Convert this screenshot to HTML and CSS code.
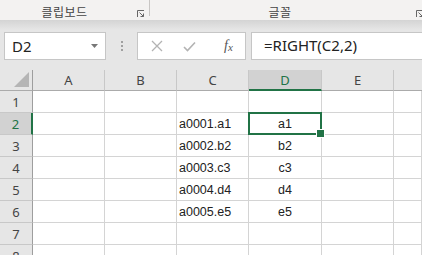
FILE: index.html
```html
<!DOCTYPE html>
<html lang="ko">
<head>
<meta charset="utf-8">
<link rel="stylesheet" href="styles.css">
</head>
<body>
<div class="ribbon">
  <div class="group g-clip">
    <span class="group-label">클립보드</span>
    <svg class="launcher" width="8" height="8" viewBox="0 0 8 8"><path d="M0.5 7V0.5H7" fill="none" stroke="#666" stroke-width="1"/><path d="M2.5 2.5L6.5 6.5M3.5 6.5H6.5V3.5" fill="none" stroke="#666" stroke-width="1"/></svg>
  </div>
  <div class="group g-font">
    <span class="group-label">글꼴</span>
    <svg class="launcher" width="8" height="8" viewBox="0 0 8 8"><path d="M0.5 7V0.5H7" fill="none" stroke="#666" stroke-width="1"/><path d="M2.5 2.5L6.5 6.5M3.5 6.5H6.5V3.5" fill="none" stroke="#666" stroke-width="1"/></svg>
  </div>
</div>
<div class="ribbon-shadow"></div>
<div class="formula-row">
  <div class="namebox">
    <span class="name">D2</span>
    <svg class="caret" width="7" height="4" viewBox="0 0 7 4"><path d="M0 0H7L3.5 4Z" fill="#777"/></svg>
  </div>
  <div class="dots"><i></i><i></i><i></i></div>
  <div class="actions">
    <svg class="act" width="12" height="12" viewBox="0 0 12 12"><path d="M1 1L11 11M11 1L1 11" stroke="#b3b3b3" stroke-width="1.3" fill="none"/></svg>
    <svg class="act" width="13" height="11" viewBox="0 0 13 11"><path d="M1 6L4.5 9.5L12 1.5" stroke="#b3b3b3" stroke-width="1.6" fill="none"/></svg>
    <span class="fx">f<sub>x</sub></span>
  </div>
  <div class="formula">=RIGHT(C2,2)</div>
</div>
<div class="sheet">
  <div class="hdr corner"><svg width="15" height="15" viewBox="0 0 15 15"><path d="M15 0V15H0Z" fill="#b5b5b5"/></svg></div>
  <div class="hdr col">A</div>
  <div class="hdr col">B</div>
  <div class="hdr col">C</div>
  <div class="hdr col sel">D</div>
  <div class="hdr col">E</div>
  <div class="hdr col last"></div>

  <div class="hdr row">1</div>
  <div class="cell"></div><div class="cell"></div><div class="cell"></div><div class="cell"></div><div class="cell"></div><div class="cell"></div>

  <div class="hdr row sel">2</div>
  <div class="cell"></div><div class="cell"></div><div class="cell">a0001.a1</div><div class="cell ctr active">a1</div><div class="cell"></div><div class="cell"></div>

  <div class="hdr row">3</div>
  <div class="cell"></div><div class="cell"></div><div class="cell">a0002.b2</div><div class="cell ctr">b2</div><div class="cell"></div><div class="cell"></div>

  <div class="hdr row">4</div>
  <div class="cell"></div><div class="cell"></div><div class="cell">a0003.c3</div><div class="cell ctr">c3</div><div class="cell"></div><div class="cell"></div>

  <div class="hdr row">5</div>
  <div class="cell"></div><div class="cell"></div><div class="cell">a0004.d4</div><div class="cell ctr">d4</div><div class="cell"></div><div class="cell"></div>

  <div class="hdr row">6</div>
  <div class="cell"></div><div class="cell"></div><div class="cell">a0005.e5</div><div class="cell ctr">e5</div><div class="cell"></div><div class="cell"></div>

  <div class="hdr row">7</div>
  <div class="cell"></div><div class="cell"></div><div class="cell"></div><div class="cell"></div><div class="cell"></div><div class="cell"></div>

  <div class="hdr row">8</div>
  <div class="cell"></div><div class="cell"></div><div class="cell"></div><div class="cell"></div><div class="cell"></div><div class="cell"></div>
</div>
</body>
</html>
```
FILE: styles.css
```css
* { box-sizing: border-box; }
html, body { margin: 0; padding: 0; }
body {
  width: 422px;
  height: 255px;
  overflow: hidden;
  background: #e6e6e6;
  font-family: "Liberation Sans", Arial, sans-serif;
}
.ribbon {
  height: 20px;
  background: #f3f2f1;
  display: flex;
}
.group {
  position: relative;
  display: flex;
  align-items: center;
}
.g-clip {
  width: 150px;
  border-right: 1px solid #c8c6c4;
  height: 16px;
  margin-top: 0;
  padding-right: 20px;
  justify-content: center;
  padding-top: 8px;
}
.g-font {
  flex: 1;
  height: 16px;
  justify-content: center;
  padding-top: 8px;
  padding-right: 12px;
}
.group-label {
  font-family: "Noto Sans CJK KR", sans-serif;
  font-size: 12px;
  color: #444;
  line-height: 14px;
  letter-spacing: 0.5px;
}
.launcher {
  position: absolute;
  top: 10px;
  right: 4px;
}
.g-font .launcher { right: -2px; }
.ribbon-shadow {
  height: 10px;
  background: linear-gradient(#d4d4d4, #e6e6e6);
}
.formula-row {
  height: 40px;
  display: flex;
  align-items: flex-start;
  padding-top: 2px;
}
.namebox {
  margin-left: 4px;
  width: 102px;
  height: 28px;
  background: #fff;
  border: 1px solid #c6c6c6;
  display: flex;
  align-items: center;
  padding-left: 7px;
  padding-right: 7px;
  justify-content: space-between;
}
.name {
  font-family: "Noto Sans", sans-serif;
  font-size: 15px;
  color: #222;
}
.dots {
  width: 31px;
  height: 28px;
  display: flex;
  flex-direction: column;
  align-items: center;
  justify-content: center;
  gap: 2px;
}
.dots i {
  width: 2px;
  height: 2px;
  background: #a0a0a0;
  display: block;
}
.actions {
  width: 109px;
  height: 28px;
  background: #fff;
  border: 1px solid #c6c6c6;
  display: flex;
  align-items: center;
  padding-left: 13px;
  gap: 20px;
}
.fx {
  font-family: "Liberation Serif", serif;
  font-style: italic;
  font-size: 14px;
  color: #555;
  margin-left: 8px;
}
.fx sub {
  font-size: 11px;
  vertical-align: -1px;
}
.formula {
  margin-left: 5px;
  flex: 1;
  height: 28px;
  background: #fff;
  border: 1px solid #c6c6c6;
  border-right: none;
  padding-left: 12px;
  font-family: "Noto Sans", sans-serif;
  font-size: 15px;
  line-height: 25px;
  color: #222;
}
.sheet {
  display: grid;
  grid-template-columns: 33px 72px 72px 72px 73px 72px 1fr;
  grid-template-rows: 21px repeat(8, 22px);
}
.hdr {
  background: #e6e6e6;
  color: #444;
  font-family: "Noto Sans", sans-serif;
  font-size: 13px;
  display: flex;
  align-items: center;
  justify-content: center;
}
.corner {
  border-right: 1px solid #9e9e9e;
  border-bottom: 1px solid #ababab;
  justify-content: flex-end;
  align-items: flex-end;
  padding: 0 3px 3px 0;
}
.corner svg { display: block; }
.col {
  border-right: 1px solid #c8c8c8;
  border-bottom: 1px solid #ababab;
}
.col.last { border-right: none; }
.col.sel {
  background: #d2d2d2;
  color: #217346;
  border-bottom: 2px solid #217346;
}
.row {
  border-right: 1px solid #9e9e9e;
  border-bottom: 1px solid #c8c8c8;
}
.row.sel {
  background: #d2d2d2;
  color: #217346;
  border-right: 2px solid #217346;
}
.cell {
  background: #fff;
  border-right: 1px solid #d4d4d4;
  border-bottom: 1px solid #d4d4d4;
  font-size: 12.5px;
  color: #222;
  display: flex;
  align-items: center;
  padding-left: 2px;
  padding-top: 1px;
  white-space: nowrap;
}
.cell.ctr { justify-content: center; padding-left: 0; }
.cell.active { position: relative; }
.cell.active::before {
  content: "";
  position: absolute;
  left: -1px;
  top: -1px;
  right: -1px;
  bottom: -1px;
  border: 2px solid #217346;
}
.cell.active::after {
  content: "";
  position: absolute;
  right: -4px;
  bottom: -4px;
  width: 7px;
  height: 7px;
  background: #217346;
  border: 1px solid #fff;
}
```
